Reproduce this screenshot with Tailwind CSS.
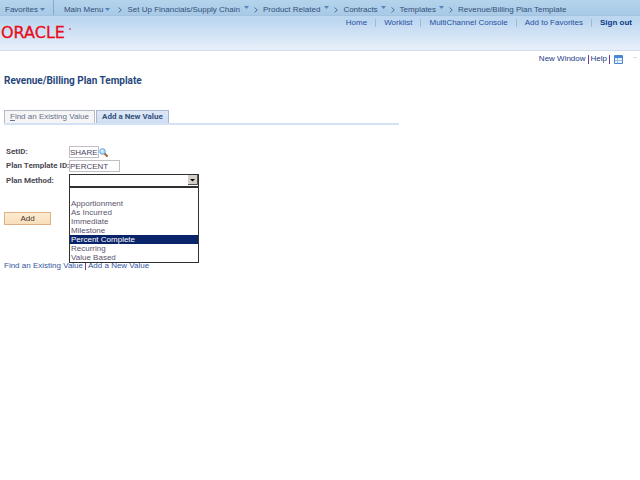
<!DOCTYPE html>
<html lang="en">
<head>
<meta charset="utf-8">
<title>Revenue/Billing Plan Template</title>
<script src="https://cdn.jsdelivr.net/npm/@tailwindcss/browser@4"></script>
</head>
<body class="min-h-screen bg-white font-['Liberation_Sans',Arial,sans-serif] text-[8px] leading-[10px] text-[#4b4b55]">
<svg class="hidden">
  <symbol id="tri" viewBox="0 0 5 3"><path d="M0 0h5L2.500 3z" fill="#5585b8"/></symbol>
  <symbol id="chev" viewBox="0 0 4 6"><path d="M.5.5 3.300 3 .5 5.500" fill="none" stroke="#4f7096"/></symbol>
</svg>
<header class="border-b border-[#d3dcea] bg-linear-to-b from-[#bdd7f0] from-40% to-[#e8f0fa]">
  <nav aria-label="Breadcrumb" class="flex h-4 items-center border-b border-[#a3c3df] bg-linear-to-b from-[#b4d3ec] to-[#a8cae8] pt-1 pl-[5px] text-[#334f76]">
    <a href="#" class="flex items-center gap-[2px]">Favorites <svg class="h-[3px] w-[5px]"><use href="#tri"/></svg></a>
    <span class="-mt-1 mr-[10px] ml-2 h-[15px] w-px bg-[#84aad0]"></span>
    <a href="#" class="flex items-center gap-[2px]">Main Menu <svg class="h-[3px] w-[5px]"><use href="#tri"/></svg></a>
    <svg class="mr-[5px] ml-2 h-[6px] w-1"><use href="#chev"/></svg>
    <a href="#" class="flex items-center gap-1">Set Up Financials/Supply Chain <svg class="mb-1 h-[3px] w-[5px]"><use href="#tri"/></svg></a>
    <svg class="mx-[5px] h-[6px] w-1"><use href="#chev"/></svg>
    <a href="#" class="flex items-center gap-1">Product Related <svg class="mb-1 h-[3px] w-[5px]"><use href="#tri"/></svg></a>
    <svg class="mx-[5px] h-[6px] w-1"><use href="#chev"/></svg>
    <a href="#" class="flex items-center gap-[3px]">Contracts <svg class="mb-1 h-[3px] w-[5px]"><use href="#tri"/></svg></a>
    <svg class="mx-[5px] h-[6px] w-1"><use href="#chev"/></svg>
    <a href="#" class="flex items-center gap-[3px]">Templates <svg class="mb-1 h-[3px] w-[5px]"><use href="#tri"/></svg></a>
    <svg class="mx-[5px] h-[6px] w-1"><use href="#chev"/></svg>
    <a href="#">Revenue/Billing Plan Template</a>
  </nav>
  <div class="flex h-[34px] items-start justify-between pr-2">
    <svg class="mt-[6px] h-6 w-[76px] overflow-visible" role="img" aria-label="Oracle">
      <text x="1" y="16" font-family="DejaVu Sans" font-size="16" fill="#e80c1c" stroke="#e80c1c" stroke-width=".3">ORACLE</text>
      <circle cx="70" cy="7" r="1" fill="#e80c1c" fill-opacity=".6"/>
    </svg>
    <nav class="flex items-center gap-2 pt-[2px] text-[#2850a0]">
      <a href="#">Home</a><span class="h-2 w-px bg-[#a3b9d2]"></span>
      <a href="#">Worklist</a><span class="h-2 w-px bg-[#a3b9d2]"></span>
      <a href="#">MultiChannel Console</a><span class="h-2 w-px bg-[#a3b9d2]"></span>
      <a href="#">Add to Favorites</a><span class="h-2 w-px bg-[#a3b9d2]"></span>
      <a href="#" class="font-bold text-[#093a86]">Sign out</a>
    </nav>
  </div>
</header>
<div class="flex items-center justify-end gap-[2px] pt-[3px] pr-[3px] text-[#263c84]">
  <a href="#">New Window</a><span class="h-[9px] w-px bg-[#713b9a]"></span>
  <a href="#">Help</a><span class="h-[9px] w-px bg-[#713b9a]"></span>
  <svg class="ml-[2px] h-[9px] w-[9px]" viewBox="0 0 9 9" role="img" aria-label="Personalize page"><path d="M.5.5h8v8h-8z" fill="#e8f2ff" stroke="#4d86ce"/><path d="M1 1h7v2H1z" fill="#4588dc"/><path d="M1 5.500h7M3.500 3v5" stroke="#9dc0ea"/></svg>
  <span class="mb-1 ml-2 h-px w-[4px] bg-[#dddddd]"></span>
</div>
<main class="px-1">
  <h1 class="mt-[11px] font-[Roboto,sans-serif] text-[10px] leading-3 font-bold text-[#28477c]">Revenue/Billing Plan Template</h1>
  <div class="mt-[23px] flex w-[395px] max-w-full gap-px border-b-2 border-[#d5e1f4]" role="tablist">
    <button type="button" role="tab" class="h-[13px] border border-b-0 border-[#b5bac8] bg-[#f5f5f6] px-[5px] text-[#69718e]"><u>F</u>ind an Existing Value</button>
    <button type="button" role="tab" aria-selected="true" class="h-[13px] border border-b-0 border-[#a9b8d0] bg-linear-to-b from-[#dce8f6] to-[#cfdef1] px-[5px] font-[Roboto,sans-serif] font-bold text-[#34517c]">Add a New Value</button>
  </div>
  <form>
    <div class="mt-[21px] grid grid-cols-[63px_1fr] items-center gap-y-[2px] pl-[2px]">
      <label for="setid" class="font-[Roboto,sans-serif] font-bold">SetID:</label>
      <div class="flex items-center">
        <input id="setid" value="SHARE" class="h-3 w-[30px] border border-[#c3bdc6] bg-white text-[#4c4661]">
        <button type="button" aria-label="Look up SetID"><svg class="h-[9px] w-[9px]" viewBox="0 0 9 9"><path d="M5.500 5.500 8 8" stroke="#a16832" stroke-width="2" stroke-linecap="round"/><circle cx="3.500" cy="3.500" r="2.800" fill="#bce3fa" stroke="#5b9ed5"/><path d="M2 3.500Q2 2 3.500 2" fill="none" stroke="#fff"/></svg></button>
      </div>
      <label for="template" class="font-[Roboto,sans-serif] font-bold whitespace-nowrap">Plan Template ID:</label>
      <input id="template" value="PERCENT" class="h-3 w-[51px] border border-[#c3bdc6] bg-white text-[#4c4661]">
      <label for="method" class="font-[Roboto,sans-serif] font-bold">Plan Method:</label>
      <div class="relative w-[130px]">
        <select id="method" class="block h-[13px] w-full appearance-none border border-[#303030] bg-white"><option selected></option><option>Apportionment</option><option>As Incurred</option><option>Immediate</option><option>Milestone</option><option>Percent Complete</option><option>Recurring</option><option>Value Based</option></select>
        <svg class="pointer-events-none absolute top-[1px] right-[1px] h-[10px] w-[10px]" viewBox="0 0 10 10"><path d="M0 0h10v10H0z" fill="#d4d0c8"/><path d="M0 9.500h9.500V0" fill="none" stroke="#55514e"/><path d="M2 4h5L4.500 6.500z" fill="#000"/></svg>
        <ul role="listbox" aria-label="Plan Method options" class="absolute top-[13px] left-0 z-10 w-full border border-[#303030] bg-white pt-[2px] text-[#5b536c] *:h-[9px] *:pl-px *:leading-[9px]">
          <li role="option"></li><li role="option">Apportionment</li><li role="option">As Incurred</li><li role="option">Immediate</li><li role="option">Milestone</li><li role="option" aria-selected="true" class="bg-[#0a246a] text-white">Percent Complete</li><li role="option">Recurring</li><li role="option">Value Based</li>
        </ul>
      </div>
    </div>
    <button type="submit" class="mt-[25px] block h-[13px] w-[47px] border border-[#dfb083] bg-linear-to-b from-[#fdebd2] to-[#f9dfba] text-[#45392f]">Add</button>
  </form>
  <nav class="mt-9 flex items-center gap-[2px] text-[#36579f]"><a href="#">Find an Existing Value</a><span class="h-2 w-px bg-[#71389b]"></span><a href="#">Add a New Value</a></nav>
</main>
</body>
</html>
